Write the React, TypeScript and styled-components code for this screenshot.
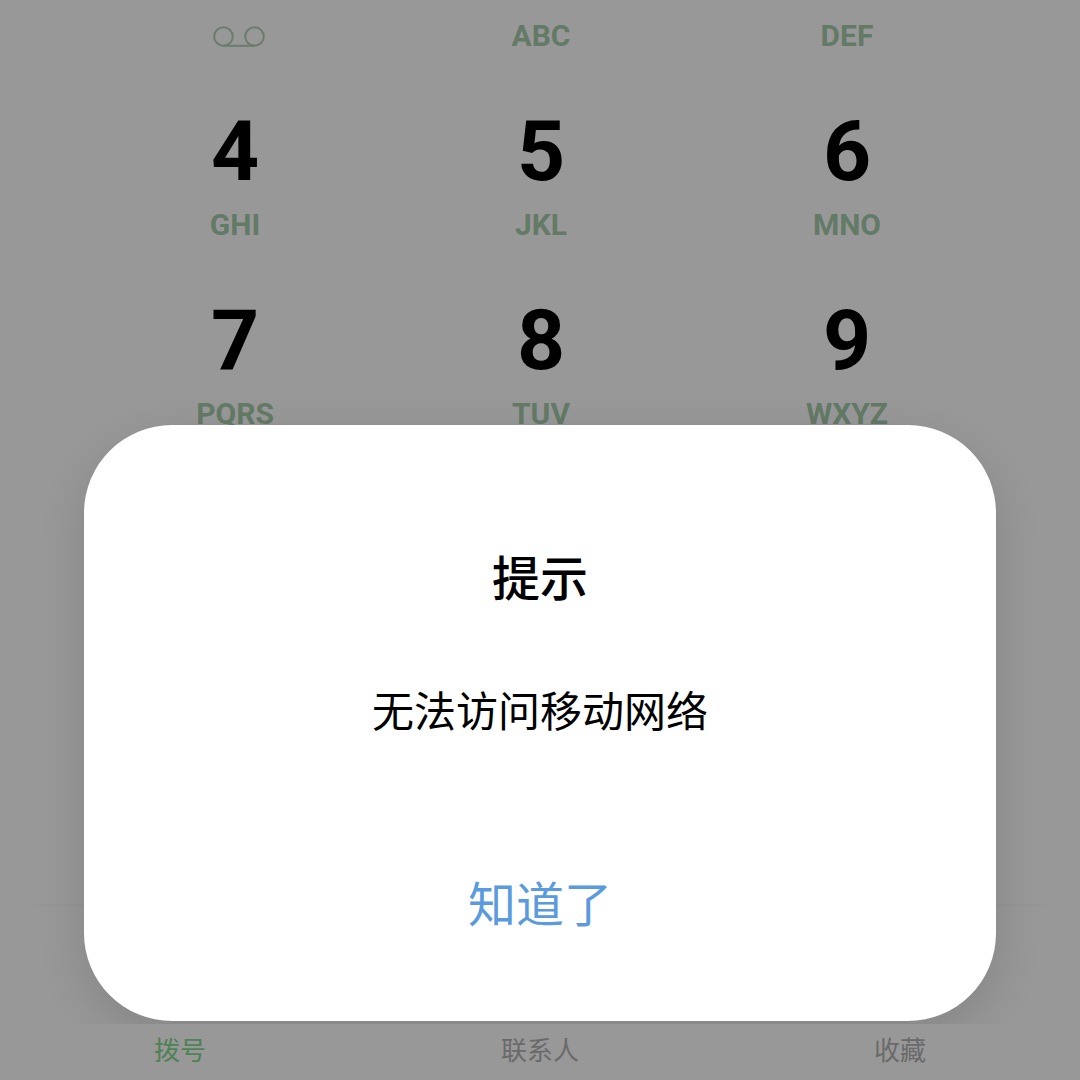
import React from "react";
import styled, { createGlobalStyle } from "styled-components";

const GlobalStyle = createGlobalStyle`
  *, *::before, *::after { box-sizing: border-box; }
  body {
    margin: 0;
    background: #989898;
    font-family: Roboto, "Noto Sans CJK SC", sans-serif;
  }
  button { font: inherit; border: 0; padding: 0; background: none; cursor: pointer; }
`;

const Screen = styled.div`
  min-height: 100vh;
  display: flex;
  flex-direction: column;
  background: #989898;
`;

const Dialer = styled.main`
  position: relative;
  flex: 1;
  display: flex;
  flex-direction: column;
  overflow: hidden;
`;

const Keypad = styled.div`
  display: grid;
  grid-template-columns: repeat(3, 1fr);
  row-gap: 56px;
  padding: 18px 80px 0 82px;
`;

const Key = styled.button`
  display: flex;
  flex-direction: column;
  align-items: center;
  gap: 13px;
`;

const Digit = styled.span`
  font-size: 84px;
  line-height: 84px;
  font-weight: 700;
  color: #000;
`;

const Letters = styled.span`
  display: flex;
  align-items: center;
  height: 36px;
  font-size: 30px;
  line-height: 36px;
  font-weight: 700;
  color: #637a67;
`;

const VoicemailIcon = styled.svg`
  width: 52px;
  height: 22px;
  margin-left: 8px;
  fill: none;
  stroke: #6a7d6d;
  stroke-width: 2;
`;

const Divider = styled.hr`
  width: calc(100% - 68px);
  height: 2px;
  margin: auto 34px 118px;
  border: 0;
  background: #959595;
`;

const Overlay = styled.div`
  position: absolute;
  inset: 0;
  display: flex;
  align-items: flex-end;
  padding: 0 84px 3px;
`;

const Dialog = styled.section`
  flex: 1;
  display: flex;
  flex-direction: column;
  align-items: center;
  padding: 119px 40px 79px;
  border-radius: 88px;
  background: #fff;
  box-shadow: 0 16px 48px rgba(0, 0, 0, 0.12);
`;

const Title = styled.h2`
  margin: 0;
  font-size: 48px;
  line-height: 72px;
  font-weight: 500;
  color: #000;
`;

const Message = styled.p`
  margin: 67px 0 127px;
  font-size: 42px;
  line-height: 60px;
  color: #000;
`;

const Confirm = styled.button`
  && {
    font-size: 48px;
    line-height: 72px;
    color: #5a9ade;
  }
`;

const TabBar = styled.nav`
  display: grid;
  grid-template-columns: repeat(3, 1fr);
  padding-bottom: 2px;
`;

const Tab = styled.button<{ $active?: boolean }>`
  && {
    font-size: 26px;
    line-height: 54px;
    color: ${(p) => (p.$active ? "#4f8255" : "#6a6a6a")};
  }
`;

const keys = [
  { digit: "4", letters: "GHI" },
  { digit: "5", letters: "JKL" },
  { digit: "6", letters: "MNO" },
  { digit: "7", letters: "PQRS" },
  { digit: "8", letters: "TUV" },
  { digit: "9", letters: "WXYZ" },
];

const tabs = ["拨号", "联系人", "收藏"];

export default function App() {
  return (
    <Screen lang="zh-CN">
      <GlobalStyle />
      <Dialer>
        <Keypad>
          <Key aria-label="1">
            <Letters>
              <VoicemailIcon viewBox="0 0 52 22" aria-hidden="true">
                <circle cx="10.5" cy="11.5" r="9.3" />
                <circle cx="41.5" cy="11.5" r="9.3" />
                <path d="M10.5 20.8H41.5" />
              </VoicemailIcon>
            </Letters>
          </Key>
          <Key>
            <Letters>ABC</Letters>
          </Key>
          <Key>
            <Letters>DEF</Letters>
          </Key>
          {keys.map((k) => (
            <Key key={k.digit}>
              <Digit>{k.digit}</Digit>
              <Letters>{k.letters}</Letters>
            </Key>
          ))}
        </Keypad>
        <Divider />
        <Overlay>
          <Dialog role="alertdialog" aria-labelledby="tip-title" aria-describedby="tip-text">
            <Title id="tip-title">提示</Title>
            <Message id="tip-text">无法访问移动网络</Message>
            <Confirm>知道了</Confirm>
          </Dialog>
        </Overlay>
      </Dialer>
      <TabBar>
        {tabs.map((name, i) => (
          <Tab key={name} $active={i === 0}>
            {name}
          </Tab>
        ))}
      </TabBar>
    </Screen>
  );
}
